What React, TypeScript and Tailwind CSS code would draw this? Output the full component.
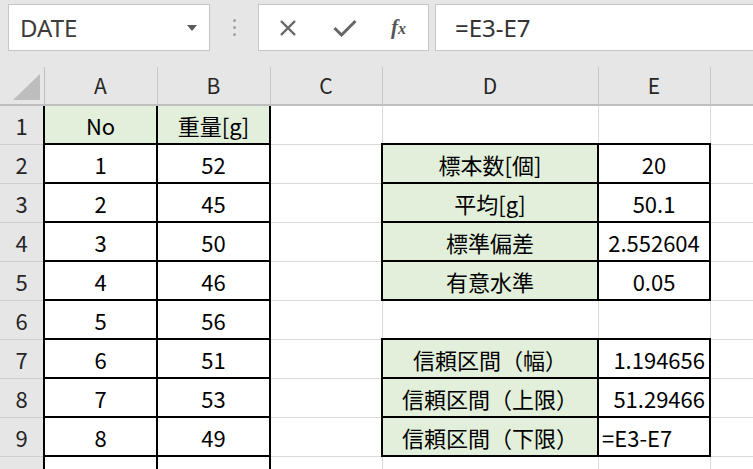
import React from "react";

type Cell = {
  text?: string;
  green?: boolean;
  box?: boolean;
  align?: "center" | "right" | "left";
  topGray?: boolean;
};

const weights = [52, 45, 50, 46, 56, 51, 53, 49, 48];

const stats: Record<number, [string, string, "center" | "right" | "left"]> = {
  2: ["標本数[個]", "20", "center"],
  3: ["平均[g]", "50.1", "center"],
  4: ["標準偏差", "2.552604", "center"],
  5: ["有意水準", "0.05", "center"],
  7: ["信頼区間（幅）", "1.194656", "right"],
  8: ["信頼区間（上限）", "51.29466", "right"],
  9: ["信頼区間（下限）", "=E3-E7", "left"],
};

const buildRow = (r: number): Cell[] => {
  const a: Cell =
    r === 1
      ? { text: "No", green: true, box: true, topGray: true }
      : { text: String(r - 1), box: true };
  const b: Cell =
    r === 1
      ? { text: "重量[g]", green: true, box: true, topGray: true }
      : { text: String(weights[r - 2]), box: true };
  const s = stats[r];
  const d: Cell = s ? { text: s[0], green: true, box: true } : {};
  const e: Cell = s ? { text: s[1], box: true, align: s[2] } : {};
  return [a, b, {}, d, e, {}];
};

const DataCell = ({ cell }: { cell: Cell }) => {
  const border = cell.box
    ? cell.topGray
      ? "border-2 border-black border-t-[#bfbfbf]"
      : "border-2 border-black"
    : "border border-[#dadada]";
  const bg = cell.green ? "bg-[#e2efda]" : "bg-white";
  const align =
    cell.align === "right"
      ? "text-right pr-[4px]"
      : cell.align === "left"
      ? "text-left pl-[3px]"
      : "text-center";
  return (
    <td className={`${border} ${bg} ${align} h-[39px] p-0 text-[22px] leading-none text-black whitespace-nowrap overflow-hidden`}>
      {cell.text}
    </td>
  );
};

const Toolbar = () => (
  <div className="flex h-[67px] items-start pt-[4px] pl-[8px] bg-[#e6e6e6]">
    <div className="flex h-[47px] w-[202px] items-center justify-between border border-[#c6c6c6] bg-white pl-[11px] pr-[12px]">
      <span className="font-['Noto_Sans',sans-serif] text-[24px] text-[#3c3c3c]">DATE</span>
      <svg width="10" height="6" viewBox="0 0 10 6">
        <path d="M0 0 L10 0 L5 6 Z" fill="#5a5a5a" />
      </svg>
    </div>
    <div className="flex h-[47px] w-[48px] flex-col items-center justify-center gap-[4px]">
      <span className="h-[3px] w-[3px] rounded-full bg-[#a0a0a0]" />
      <span className="h-[3px] w-[3px] rounded-full bg-[#a0a0a0]" />
      <span className="h-[3px] w-[3px] rounded-full bg-[#a0a0a0]" />
    </div>
    <div className="flex h-[47px] w-[171px] items-center border border-[#c6c6c6] bg-white pl-[20px]">
      <svg width="18" height="18" viewBox="0 0 18 18">
        <path d="M2 2 L16 16 M16 2 L2 16" stroke="#666" strokeWidth="2.4" />
      </svg>
      <svg className="ml-[36px]" width="24" height="18" viewBox="0 0 24 18">
        <path d="M1.5 9 L8.5 16 L22.5 2" stroke="#666" strokeWidth="3" fill="none" />
      </svg>
      <span className="ml-[34px] font-['Liberation_Serif',serif] text-[21px] italic font-bold text-[#555] leading-none">
        f<span className="text-[16px]">x</span>
      </span>
    </div>
    <div className="ml-[6px] flex h-[47px] flex-1 items-center border border-[#c6c6c6] border-r-0 bg-white pl-[19px]">
      <span className="font-['Noto_Sans',sans-serif] text-[24px] text-[#333]">=E3-E7</span>
    </div>
  </div>
);

export default function App() {
  const cols = ["A", "B", "C", "D", "E", ""];
  const rows = Array.from({ length: 10 }, (_, i) => i + 1);
  return (
    <div className="h-[469px] w-[753px] overflow-hidden bg-white font-['Noto_Sans_CJK_JP',sans-serif]">
      <Toolbar />
      <table className="w-[810px] table-fixed border-collapse">
        <colgroup>
          <col className="w-[44px]" />
          <col className="w-[113px]" />
          <col className="w-[113px]" />
          <col className="w-[112px]" />
          <col className="w-[216px]" />
          <col className="w-[112px]" />
          <col className="w-[100px]" />
        </colgroup>
        <thead>
          <tr>
            <th className="h-[38px] p-0 bg-[#e6e6e6] border-r border-[#c0c0c0] border-b-2 border-b-[#bfbfbf] relative">
              <svg className="absolute right-[4px] bottom-[4px]" width="27" height="26" viewBox="0 0 27 26">
                <path d="M27 0 L27 26 L0 26 Z" fill="#bdbdbd" />
              </svg>
            </th>
            {cols.map((c, i) => (
              <th
                key={i}
                className="h-[38px] p-0 bg-[#e6e6e6] border-x border-[#c8c8c8] border-b-2 border-b-[#bfbfbf] text-center text-[21px] font-normal leading-none text-[#262626]"
              >
                {c}
              </th>
            ))}
          </tr>
        </thead>
        <tbody>
          {rows.map((r) => (
            <tr key={r}>
              <td className="h-[39px] p-0 bg-[#e6e6e6] border-r border-r-[#bfbfbf] border-b border-b-[#cfcfcf] text-center text-[22px] leading-none text-[#262626]">
                {r}
              </td>
              {buildRow(r).map((c, i) => (
                <DataCell key={i} cell={c} />
              ))}
            </tr>
          ))}
        </tbody>
      </table>
    </div>
  );
}
